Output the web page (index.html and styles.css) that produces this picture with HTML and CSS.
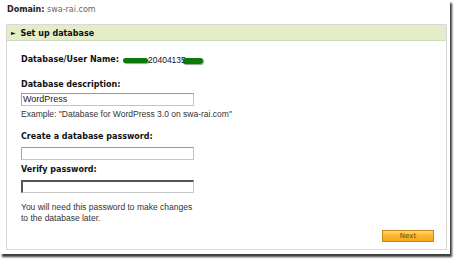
FILE: index.html
```html
<!DOCTYPE html>
<html>
<head>
<meta charset="utf-8">
<link rel="stylesheet" href="styles.css">
</head>
<body>
<div class="shot">
  <div class="domain"><b>Domain:</b> <span class="dval">swa-rai.com</span></div>
  <div class="panel">
    <div class="phead"><span class="tri">&#9658;</span> Set up database</div>
    <div class="pbody">
      <div class="lbl userrow">Database/User Name:<span class="uname"><span class="blob b1"></span>20404135<span class="blob b2"></span></span></div>
      <div class="lbl mt">Database description:</div>
      <div class="inp first">WordPress</div>
      <div class="hint">Example: "Database for WordPress 3.0 on swa-rai.com"</div>
      <div class="lbl mt2">Create a database password:</div>
      <div class="inp"></div>
      <div class="lbl mt3">Verify password:</div>
      <div class="inp focus"></div>
      <div class="note">You will need this password to make changes<br>to the database later.</div>
      <div class="actions"><span class="btn">Next</span></div>
    </div>
  </div>
</div>
</body>
</html>
```
FILE: styles.css
```css
html, body { margin: 0; padding: 0; background: #fff; }
body { width: 454px; height: 259px; overflow: hidden; }
.shot {
  width: 450px; height: 254px; box-sizing: border-box;
  background: #fff;
  box-shadow: 2px 3px 2px #3a3a3a;
  padding: 4px 0 0 6px;
  font-family: "DejaVu Sans", Verdana, sans-serif;
}
.domain { font-size: 8px; color: #222; padding-left: 1px; height: 20px; line-height: 12px; }
.domain b { font-weight: bold; }
.dval { color: #666; font-size: 8px; }
.panel { width: 441px; height: 226px; box-sizing: border-box; border: 1px solid #d8d8d8; }
.phead {
  background: #e3edc8; border-bottom: 1px solid #d2d9c0;
  height: 15px; line-height: 15px; font-weight: bold; font-size: 8px; color: #111;
  padding-left: 4px;
}
.tri { font-size: 6px; vertical-align: 1px; margin-right: 2px; }
.pbody { padding: 13px 0 0 14px; height: 193px; }
.lbl { font-weight: bold; font-size: 8px; color: #111; line-height: 12px; }
.userrow { height: 12px; display: flex; align-items: center; }
.uname { display: inline-flex; align-items: center; margin-left: 4px; font-family: "Liberation Sans", Arial, sans-serif; font-weight: normal; font-size: 8.5px; }
.blob { display: inline-block; height: 5px; background: #0a7a0a; border-radius: 3px; box-shadow: 1px 1px 1px #8aa88a; }
.b1 { width: 25px; }
.b2 { width: 20px; margin-left: -3px; height: 6px; border-radius: 2px 3px 4px 2px; transform: translateY(1px); }
.mt { margin-top: 13px; }
.inp {
  width: 173px; height: 13px; box-sizing: border-box; margin-top: 4px;
  border: 1px solid #c4c4c4; border-top-color: #9a9a9a; border-left-color: #a8a8a8;
  font-family: "Liberation Sans", Arial, sans-serif; font-size: 9px; line-height: 11px; padding-left: 1px; color: #222;
}
.inp.first { margin-top: 2px; }
.inp.focus { border: 1px solid #c8c8c8; border-top: 2px solid #555; border-left: 2px solid #555; }
.hint { font-family: "Liberation Sans", Arial, sans-serif; font-size: 8.5px; color: #333; margin-top: 3px; line-height: 11px; }
.mt2 { margin-top: 11px; }
.mt3 { margin-top: 4px; }
.note { font-family: "Liberation Sans", Arial, sans-serif; font-size: 8.5px; color: #333; margin-top: 9px; line-height: 11px; }
.actions { display: flex; justify-content: flex-end; padding-right: 12px; margin-top: 6px; }
.btn {
  width: 52px; height: 12px; box-sizing: border-box;
  background: linear-gradient(#ffd874, #f9b628 50%, #f7a81c);
  border: 1px solid #c8851a;
  font-family: "DejaVu Sans", Verdana, sans-serif; font-size: 7px; color: #6a4a10;
  text-align: center; line-height: 10px;
}
```
